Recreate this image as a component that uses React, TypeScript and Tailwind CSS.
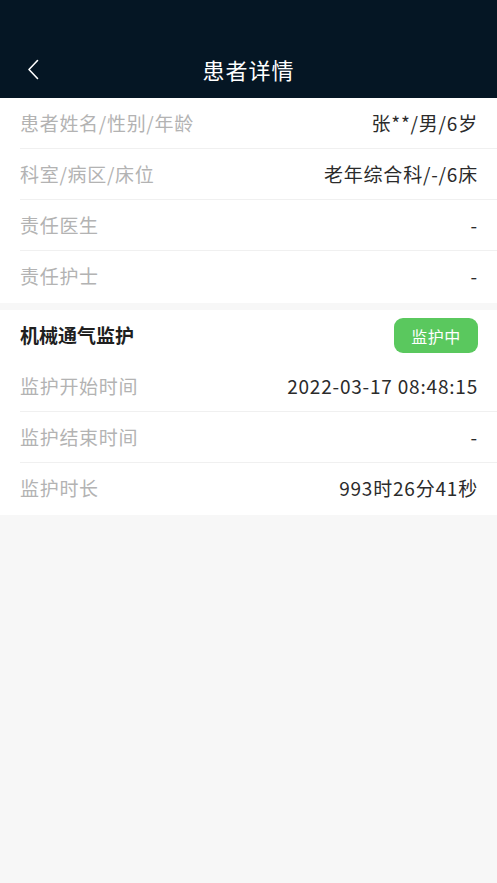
const font = { fontFamily: '"Noto Sans CJK SC", "Noto Sans", sans-serif' };

type Row = { label: string; value: string };

const patientRows: Row[] = [
  { label: "患者姓名/性别/年龄", value: "张**/男/6岁" },
  { label: "科室/病区/床位", value: "老年综合科/-/6床" },
  { label: "责任医生", value: "-" },
  { label: "责任护士", value: "-" },
];

const monitorRows: Row[] = [
  { label: "监护开始时间", value: "2022-03-17 08:48:15" },
  { label: "监护结束时间", value: "-" },
  { label: "监护时长", value: "993时26分41秒" },
];

function InfoRow({ row, last }: { row: Row; last: boolean }) {
  return (
    <div className={`ml-5 flex h-[51px] items-center justify-between pr-[19px] ${last ? "" : "border-b border-[#f0f0f0]"}`}>
      <span className="text-[19px] tracking-[0.7px] text-[#b3b3b3]">{row.label}</span>
      <span className="text-[19px] tracking-[0.8px] text-[#2b2b2b]">{row.value}</span>
    </div>
  );
}

export default function App() {
  return (
    <div className="flex min-h-[883px] flex-col bg-[#f7f7f7]" style={font}>
      <header className="flex h-[98px] items-end bg-[#051624] pb-[6px]">
        <div className="relative flex h-[45px] w-full items-center justify-center">
          <svg className="absolute left-[27px] top-[12px]" width="12" height="21" viewBox="0 0 12 21" fill="none">
            <path d="M10.5 1.5 L2 10.5 L10.5 19.5" stroke="#ffffff" strokeWidth="1.6" strokeLinecap="round" strokeLinejoin="round" />
          </svg>
          <h1 className="text-[22px] tracking-[1px] text-white">患者详情</h1>
        </div>
      </header>

      <section className="bg-white pb-px">
        {patientRows.map((row, i) => (
          <InfoRow key={row.label} row={row} last={i === patientRows.length - 1} />
        ))}
      </section>

      <section className="mt-[7px] bg-white pb-px">
        <div className="flex h-[51px] items-center justify-between pl-5 pr-[19px]">
          <span className="text-[19px] font-bold text-[#1f1f1f]">机械通气监护</span>
          <span className="flex h-[35px] w-[84px] items-center justify-center rounded-[9px] bg-[#5ac85e] text-[16px] tracking-[0.5px] text-white">
            监护中
          </span>
        </div>
        {monitorRows.map((row, i) => (
          <InfoRow key={row.label} row={row} last={i === monitorRows.length - 1} />
        ))}
      </section>
    </div>
  );
}
